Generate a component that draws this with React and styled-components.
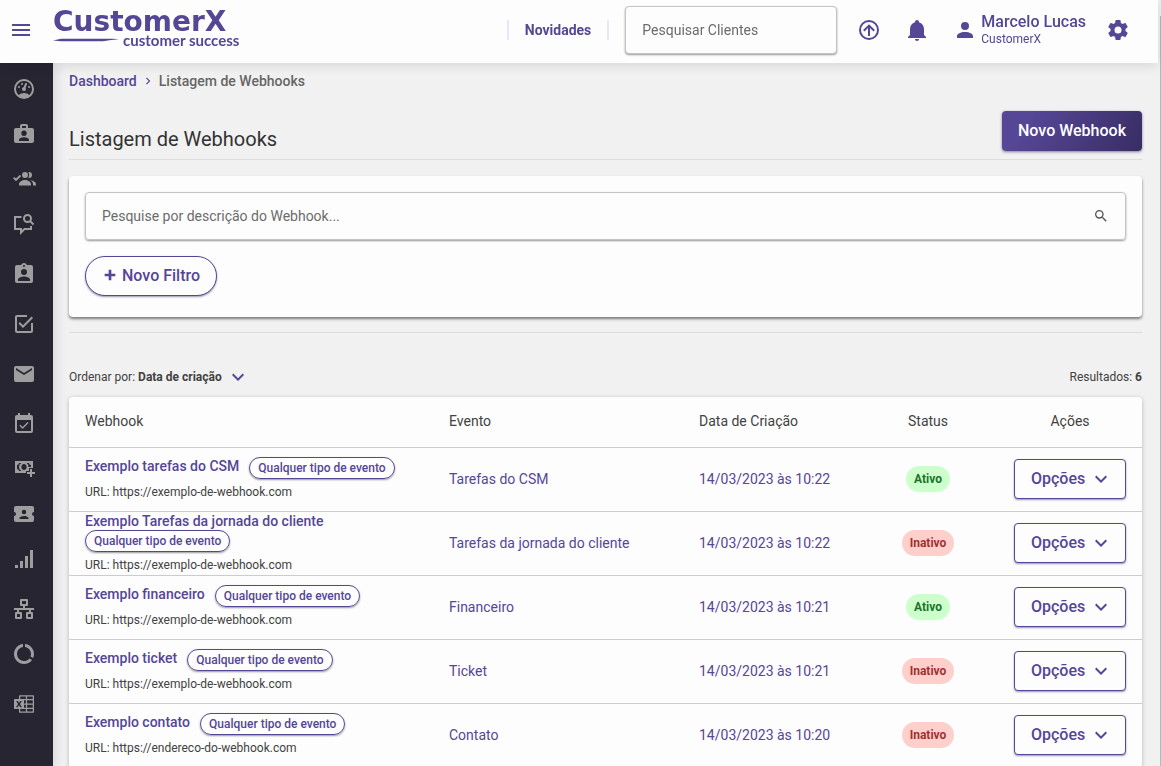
import React from 'react';
import styled, { createGlobalStyle } from 'styled-components';

const icons = {
  menu: 'M3,6H21V8H3V6M3,11H21V13H3V11M3,16H21V18H3V16Z',
  arrowUp:
    'M13,18V10L16.5,13.5L17.92,12.08L12,6.16L6.08,12.08L7.5,13.5L11,10V18H13M12,2A10,10 0 0,1 22,12A10,10 0 0,1 12,22A10,10 0 0,1 2,12A10,10 0 0,1 12,2M12,4A8,8 0 0,0 4,12A8,8 0 0,0 12,20A8,8 0 0,0 20,12A8,8 0 0,0 12,4Z',
  bell: 'M21,19V20H3V19L5,17V11C5,7.9 7.03,5.17 10,4.29C10,4.19 10,4.1 10,4A2,2 0 0,1 12,2A2,2 0 0,1 14,4C14,4.1 14,4.19 14,4.29C16.97,5.17 19,7.9 19,11V17L21,19M14,21A2,2 0 0,1 12,23A2,2 0 0,1 10,21',
  account:
    'M12,4A4,4 0 0,1 16,8A4,4 0 0,1 12,12A4,4 0 0,1 8,8A4,4 0 0,1 12,4M12,14C16.42,14 20,15.79 20,18V20H4V18C4,15.79 7.58,14 12,14Z',
  cog: 'M12,15.5A3.5,3.5 0 0,1 8.5,12A3.5,3.5 0 0,1 12,8.5A3.5,3.5 0 0,1 15.5,12A3.5,3.5 0 0,1 12,15.5M19.43,12.97C19.47,12.65 19.5,12.33 19.5,12C19.5,11.67 19.47,11.34 19.43,11L21.54,9.37C21.73,9.22 21.78,8.95 21.66,8.73L19.66,5.27C19.54,5.05 19.27,4.96 19.05,5.05L16.56,6.05C16.04,5.66 15.5,5.32 14.87,5.07L14.5,2.42C14.46,2.18 14.25,2 14,2H10C9.75,2 9.54,2.18 9.5,2.42L9.13,5.07C8.5,5.32 7.96,5.66 7.44,6.05L4.95,5.05C4.73,4.96 4.46,5.05 4.34,5.27L2.34,8.73C2.21,8.95 2.27,9.22 2.46,9.37L4.57,11C4.53,11.34 4.5,11.67 4.5,12C4.5,12.33 4.53,12.65 4.57,12.97L2.46,14.63C2.27,14.78 2.21,15.05 2.34,15.27L4.34,18.73C4.46,18.95 4.73,19.03 4.95,18.95L7.44,17.94C7.96,18.34 8.5,18.68 9.13,18.93L9.5,21.58C9.54,21.82 9.75,22 10,22H14C14.25,22 14.46,21.82 14.5,21.58L14.87,18.93C15.5,18.67 16.04,18.34 16.56,17.94L19.05,18.95C19.27,19.03 19.54,18.95 19.66,18.73L21.66,15.27C21.78,15.05 21.73,14.78 21.54,14.63L19.43,12.97Z',
  gauge:
    'M12,2A10,10 0 0,0 2,12A10,10 0 0,0 12,22A10,10 0 0,0 22,12A10,10 0 0,0 12,2M12,4A8,8 0 0,1 20,12C20,14.4 19,16.5 17.3,18C15.9,16.7 14,16 12,16C10,16 8.2,16.7 6.7,18C5,16.5 4,14.4 4,12A8,8 0 0,1 12,4M14,5.89C13.62,5.9 13.26,6.15 13.1,6.54L11.81,9.77L11.71,10C11,10.13 10.41,10.6 10.14,11.26C9.73,12.29 10.23,13.45 11.26,13.86C12.29,14.27 13.45,13.77 13.86,12.74C14.12,12.08 14,11.32 13.57,10.76L13.67,10.5L14.96,7.29L14.97,7.26C15.17,6.75 14.92,6.17 14.41,5.96C14.28,5.91 14.15,5.89 14,5.89M10,6A1,1 0 0,0 9,7A1,1 0 0,0 10,8A1,1 0 0,0 11,7A1,1 0 0,0 10,6M7,9A1,1 0 0,0 6,10A1,1 0 0,0 7,11A1,1 0 0,0 8,10A1,1 0 0,0 7,9M17,9A1,1 0 0,0 16,10A1,1 0 0,0 17,11A1,1 0 0,0 18,10A1,1 0 0,0 17,9Z',
  briefcase:
    'M10,2H14A2,2 0 0,1 16,4V6H20A2,2 0 0,1 22,8V19A2,2 0 0,1 20,21H4C2.89,21 2,20.1 2,19V8C2,6.89 2.89,6 4,6H8V4C8,2.89 8.89,2 10,2M14,6V4H10V6H14M12,8.6A2.7,2.7 0 0,0 9.3,11.3A2.7,2.7 0 0,0 12,14A2.7,2.7 0 0,0 14.7,11.3A2.7,2.7 0 0,0 12,8.6M17,19V18C17,16.2 14.2,15.2 12,15.2C9.8,15.2 7,16.2 7,18V19H17Z',
  accounts:
    'M13,5A3,3 0 0,1 16,8A3,3 0 0,1 13,11A3,3 0 0,1 10,8A3,3 0 0,1 13,5M17,5A3,3 0 0,1 20,8A3,3 0 0,1 17,11C16.7,11 16.5,11 16.2,10.9C16.8,10.1 17.1,9.1 17.1,8C17.1,6.9 16.8,5.9 16.2,5.1C16.5,5 16.7,5 17,5M7,18.5V17C7,14.8 10.2,13 13,13C15.8,13 19,14.8 19,17V18.5H7M18.2,13.3C20.8,13.7 24,15 24,17V18.5H21V17C21,15.5 19.8,14.2 18.2,13.3M1,11.2L2.3,9.9L4,11.6L7.9,7.8L9.1,9.2L4,14.2Z',
  clipboard:
    'M19,3H14.82C14.4,1.84 13.3,1 12,1C10.7,1 9.6,1.84 9.18,3H5A2,2 0 0,0 3,5V19A2,2 0 0,0 5,21H19A2,2 0 0,0 21,19V5A2,2 0 0,0 19,3M12,3A1,1 0 0,1 13,4A1,1 0 0,1 12,5A1,1 0 0,1 11,4A1,1 0 0,1 12,3M12,7A3,3 0 0,1 15,10A3,3 0 0,1 12,13A3,3 0 0,1 9,10A3,3 0 0,1 12,7M18,19H6V17.6C6,15.6 10,14.5 12,14.5C14,14.5 18,15.6 18,17.6V19Z',
  checkbox:
    'M19,19H5V5H15V3H5C3.89,3 3,3.89 3,5V19A2,2 0 0,0 5,21H19A2,2 0 0,0 21,19V11H19M7.91,10.08L6.5,11.5L11,16L21,6L19.59,4.58L11,13.17L7.91,10.08Z',
  email:
    'M20,8L12,13L4,8V6L12,11L20,6M20,4H4C2.89,4 2,4.89 2,6V18A2,2 0 0,0 4,20H20A2,2 0 0,0 22,18V6C22,4.89 21.1,4 20,4Z',
  calendar:
    'M19,19H5V8H19M19,3H18V1H16V3H8V1H6V3H5C3.89,3 3,3.9 3,5V19A2,2 0 0,0 5,21H19A2,2 0 0,0 21,19V5A2,2 0 0,0 19,3M16.53,11.06L15.47,10L10.59,14.88L8.47,12.76L7.41,13.82L10.59,17L16.53,11.06Z',
  cash: 'M3,4H21V11H17V14H14V16H3V4M7,6A2,2 0 0,1 5,8V12A2,2 0 0,1 7,14H9.3A4.6,4.6 0 0,1 9.3,6H7M12,7A3,3 0 0,0 9.4,10A3,3 0 0,0 12,13A3,3 0 0,0 14.6,10A3,3 0 0,0 12,7M14.7,6A4.6,4.6 0 0,1 16.5,10H19V8A2,2 0 0,1 17,6H14.7M18,12H20V15H23V17H20V20H18V17H15V15H18V12Z',
  ticket:
    'M20,12A2,2 0 0,0 22,14V18A2,2 0 0,1 20,20H4A2,2 0 0,1 2,18V14C3.11,14 4,13.11 4,12A2,2 0 0,0 2,10V6A2,2 0 0,1 4,4H20A2,2 0 0,1 22,6V10A2,2 0 0,0 20,12M16.5,16.25C16.5,14.75 13.5,14 12,14C10.5,14 7.5,14.75 7.5,16.25V17H16.5V16.25M12,12.25A2.25,2.25 0 0,0 14.25,10A2.25,2.25 0 0,0 12,7.75A2.25,2.25 0 0,0 9.75,10A2.25,2.25 0 0,0 12,12.25Z',
  signal: 'M3,21H6V18H3M8,21H11V14H8M13,21H16V9H13M18,21H21V3H18V21Z',
  sitemap:
    'M9,2H15A1,1 0 0,1 16,3V8A1,1 0 0,1 15,9H13V11H22V13H19V15H20A1,1 0 0,1 21,16V21A1,1 0 0,1 20,22H15A1,1 0 0,1 14,21V16A1,1 0 0,1 15,15H17V13H7V15H9A1,1 0 0,1 10,16V21A1,1 0 0,1 9,22H4A1,1 0 0,1 3,21V16A1,1 0 0,1 4,15H5V13H2V11H11V9H9A1,1 0 0,1 8,8V3A1,1 0 0,1 9,2M10,4V7H14V4H10M5,17V20H8V17H5M16,17V20H19V17H16Z',
  donut:
    'M13,2.05C18.05,2.55 22,6.82 22,12C22,13.45 21.68,14.83 21.12,16.07L18.5,14.54C18.82,13.75 19,12.9 19,12C19,8.47 16.39,5.57 13,5.08V2.05M12,19C14.21,19 16.17,18 17.45,16.38L20.05,17.91C18.23,20.39 15.3,22 12,22C6.47,22 2,17.5 2,12C2,6.81 5.94,2.55 11,2.05V5.08C7.61,5.57 5,8.47 5,12A7,7 0 0,0 12,19Z',
  excel:
    'M21.17 3.25Q21.5 3.25 21.76 3.5 22 3.74 22 4.08V19.92Q22 20.26 21.76 20.5 21.5 20.75 21.17 20.75H7.83Q7.5 20.75 7.24 20.5 7 20.26 7 19.92V17H2.83Q2.5 17 2.24 16.76 2 16.5 2 16.17V7.83Q2 7.5 2.24 7.24 2.5 7 2.83 7H7V4.08Q7 3.74 7.24 3.5 7.5 3.25 7.83 3.25M7 13.06L8.18 15.28H9.97L8 12.06L9.93 8.89H8.22L7.13 10.9L7.09 10.96L7.06 11.03Q6.8 10.5 6.5 9.96 6.25 9.43 5.97 8.89H4.16L6.05 12.08L4 15.28H5.78M13.88 19.5V17H8.25V19.5M13.88 15.75V12.63H12V15.75M13.88 11.38V8.25H12V11.38M13.88 7V4.5H8.25V7M20.75 19.5V17H15.13V19.5M20.75 15.75V12.63H15.13V15.75M20.75 11.38V8.25H15.13V11.38M20.75 7V4.5H15.13V7Z',
  chevronDown: 'M7.41,8.58L12,13.17L16.59,8.58L18,10L12,16L6,10L7.41,8.58Z',
  chevronRight: 'M8.59,16.58L13.17,12L8.59,7.41L10,6L16,12L10,18L8.59,16.58Z',
  plus: 'M20 14H14V20H10V14H4V10H10V4H14V10H20V14Z',
  magnify:
    'M9.5,3A6.5,6.5 0 0,1 16,9.5C16,11.11 15.41,12.59 14.44,13.73L14.71,14H15.5L20.5,19L19,20.5L14,15.5V14.71L13.73,14.44C12.59,15.41 11.11,16 9.5,16A6.5,6.5 0 0,1 3,9.5A6.5,6.5 0 0,1 9.5,3M9.5,5C7,5 5,7 5,9.5C5,12 7,14 9.5,14C12,14 14,12 14,9.5C14,7 12,5 9.5,5Z',
};

const Icon = ({ name, size = 24 }) => (
  <Svg width={size} height={size} viewBox="0 0 24 24" aria-hidden="true">
    <path fillRule="evenodd" d={icons[name]} />
  </Svg>
);

const MessageSearchIcon = () => (
  <Svg width="24" height="24" viewBox="0 0 24 24" aria-hidden="true">
    <g fill="none" stroke="currentColor" strokeWidth="2">
      <path d="M9.5 5H3V17H9V20.5L12.5 17H19V14" />
      <circle cx="15.5" cy="6.5" r="3.5" />
      <path d="M18 9L21.5 12.5" />
    </g>
  </Svg>
);

const menuItems = [
  { label: 'Dashboard', icon: 'gauge' },
  { label: 'Clientes', icon: 'briefcase' },
  { label: 'Contatos', icon: 'accounts' },
  { label: 'Interações', icon: 'message' },
  { label: 'Cadastros', icon: 'clipboard', spaced: true },
  { label: 'Tarefas', icon: 'checkbox', spaced: true },
  { label: 'E-mails', icon: 'email', spaced: true },
  { label: 'Agenda', icon: 'calendar', spaced: true },
  { label: 'Financeiro', icon: 'cash' },
  { label: 'Tickets', icon: 'ticket' },
  { label: 'Indicadores', icon: 'signal' },
  { label: 'Jornadas', icon: 'sitemap', spaced: true },
  { label: 'Uso', icon: 'donut' },
  { label: 'Planilhas', icon: 'excel', spaced: true },
];

const webhooks = [
  {
    name: 'Exemplo tarefas do CSM',
    url: 'https://exemplo-de-webhook.com',
    event: 'Tarefas do CSM',
    date: '14/03/2023 às 10:22',
    active: true,
  },
  {
    name: 'Exemplo Tarefas da jornada do cliente',
    url: 'https://exemplo-de-webhook.com',
    event: 'Tarefas da jornada do cliente',
    date: '14/03/2023 às 10:22',
    active: false,
  },
  {
    name: 'Exemplo financeiro',
    url: 'https://exemplo-de-webhook.com',
    event: 'Financeiro',
    date: '14/03/2023 às 10:21',
    active: true,
  },
  {
    name: 'Exemplo ticket',
    url: 'https://exemplo-de-webhook.com',
    event: 'Ticket',
    date: '14/03/2023 às 10:21',
    active: false,
  },
  {
    name: 'Exemplo contato',
    url: 'https://endereco-do-webhook.com',
    event: 'Contato',
    date: '14/03/2023 às 10:20',
    active: false,
  },
];

const App = () => {
  return (
    <>
      <GlobalStyle />
      <Page>
        <Header>
          <IconButton aria-label="Menu">
            <Icon name="menu" />
          </IconButton>
          <Logo href="#">
            <LogoName>CustomerX</LogoName>
            <LogoTagline>
              <LogoSwoosh viewBox="0 0 66 4" aria-hidden="true">
                <path d="M0 2.4L8 0.8H60L66 1.2L58 2L50 3.2H8Z" />
              </LogoSwoosh>
              customer success
            </LogoTagline>
          </Logo>
          <NewsLink href="#">Novidades</NewsLink>
          <ClientSearch
            type="search"
            aria-label="Pesquisar Clientes"
            placeholder="Pesquisar Clientes"
          />
          <HeaderActions>
            <IconButton aria-label="Enviar">
              <Icon name="arrowUp" />
            </IconButton>
            <IconButton aria-label="Notificações">
              <Icon name="bell" />
            </IconButton>
            <User href="#">
              <Icon name="account" />
              <span>
                <UserName>Marcelo Lucas</UserName>
                <UserCompany>CustomerX</UserCompany>
              </span>
            </User>
          </HeaderActions>
          <IconButton aria-label="Configurações">
            <Icon name="cog" />
          </IconButton>
        </Header>

        <Body>
          <Sidebar>
            {menuItems.map((item) => (
              <SidebarLink
                key={item.label}
                href="#"
                aria-label={item.label}
                $spaced={item.spaced}
              >
                {item.icon === 'message' ? (
                  <MessageSearchIcon />
                ) : (
                  <Icon name={item.icon} />
                )}
              </SidebarLink>
            ))}
          </Sidebar>

          <Main>
            <Breadcrumb>
              <BreadcrumbLink href="#">Dashboard</BreadcrumbLink>
              <Icon name="chevronRight" size={14} />
              <span>Listagem de Webhooks</span>
            </Breadcrumb>

            <TitleBar>
              <Title>Listagem de Webhooks</Title>
              <PrimaryButton>Novo Webhook</PrimaryButton>
            </TitleBar>

            <FilterCard>
              <SearchField>
                <SearchInput
                  type="search"
                  aria-label="Pesquisar webhook"
                  placeholder="Pesquise por descrição do Webhook..."
                />
                <Icon name="magnify" size={16} />
              </SearchField>
              <FilterButton>
                <Icon name="plus" size={16} />
                Novo Filtro
              </FilterButton>
            </FilterCard>

            <ListBar>
              <SortButton>
                <span>
                  Ordenar por: <b>Data de criação</b>
                </span>
                <Icon name="chevronDown" />
              </SortButton>
              <span>
                Resultados: <b>6</b>
              </span>
            </ListBar>

            <Table>
              <colgroup>
                <col />
                <Col $width={250} />
                <Col $width={175} />
                <Col $width={140} />
                <Col $width={144} />
              </colgroup>
              <thead>
                <tr>
                  <HeadCell>Webhook</HeadCell>
                  <HeadCell>Evento</HeadCell>
                  <HeadCell>Data de Criação</HeadCell>
                  <HeadCell $center>Status</HeadCell>
                  <HeadCell $center>Ações</HeadCell>
                </tr>
              </thead>
              <tbody>
                {webhooks.map((webhook) => (
                  <tr key={webhook.name}>
                    <Cell>
                      <NameLine>
                        <WebhookName href="#">{webhook.name}</WebhookName>
                        <Chip>Qualquer tipo de evento</Chip>
                      </NameLine>
                      <Url>URL: {webhook.url}</Url>
                    </Cell>
                    <Cell>{webhook.event}</Cell>
                    <Cell>{webhook.date}</Cell>
                    <Cell $center>
                      <Status $active={webhook.active}>
                        {webhook.active ? 'Ativo' : 'Inativo'}
                      </Status>
                    </Cell>
                    <Cell $center>
                      <OptionsButton>
                        Opções
                        <Icon name="chevronDown" />
                      </OptionsButton>
                    </Cell>
                  </tr>
                ))}
              </tbody>
            </Table>
          </Main>
        </Body>
        <ScrollThumb />
      </Page>
    </>
  );
};

const GlobalStyle = createGlobalStyle`
  * {
    box-sizing: border-box;
  }

  body {
    margin: 0;
    background: #f1f1f1;
    color: #424242;
    font-family: Roboto, sans-serif;
    font-size: 14px;
  }

  a {
    text-decoration: none;
  }

  button,
  input {
    font-family: inherit;
  }

  button {
    cursor: pointer;
  }

  b {
    font-weight: 700;
  }
`;

const Svg = styled.svg`
  display: block;
  flex-shrink: 0;
  fill: currentColor;
`;

const Page = styled.div`
  display: flex;
  flex-direction: column;
  height: 100vh;
  overflow: hidden;
  padding-right: 3px;
`;

const Header = styled.header`
  display: flex;
  align-items: center;
  flex-shrink: 0;
  height: 63px;
  padding: 0 28px 3px 9px;
  background: #fdfdfd;
  box-shadow: 0 2px 12px rgba(0, 0, 0, 0.12);
  z-index: 1;
`;

const IconButton = styled.button`
  display: flex;
  padding: 0;
  border: 0;
  background: none;
  color: #554696;
`;

const Logo = styled.a`
  display: flex;
  flex-direction: column;
  margin: 0 auto 0 20px;
  color: #554696;
`;

const LogoName = styled.span`
  font-family: 'DejaVu Sans', sans-serif;
  font-size: 28px;
  font-weight: 700;
  line-height: 20px;
`;

const LogoTagline = styled.span`
  display: flex;
  align-items: center;
  gap: 4px;
  font-family: Lato, sans-serif;
  font-size: 15px;
  font-weight: 700;
  line-height: 16px;
`;

const LogoSwoosh = styled.svg`
  width: 66px;
  height: 4px;
  fill: currentColor;
`;

const NewsLink = styled.a`
  padding: 0 16px;
  border: solid #e8e5fd;
  border-width: 0 2px;
  color: #554696;
  font-weight: 700;
  line-height: 20px;
`;

const ClientSearch = styled.input`
  width: 212px;
  height: 48px;
  margin-left: 16px;
  padding: 0 16px;
  border: 1px solid #c4c4c4;
  border-radius: 4px;
  background: #fdfdfd;
  box-shadow: 0 1px 2px rgba(0, 0, 0, 0.4);
  font-size: 14px;

  &::placeholder {
    color: #6b6b6b;
  }
`;

const HeaderActions = styled.div`
  display: flex;
  align-items: center;
  gap: 24px;
  margin: 0 20px;
`;

const User = styled.a`
  display: flex;
  align-items: center;
  gap: 4px;
  color: #554696;
`;

const UserName = styled.strong`
  display: block;
  font-size: 16px;
  font-weight: 500;
  line-height: 18px;
`;

const UserCompany = styled.span`
  display: block;
  font-size: 12px;
  line-height: 16px;
`;

const Body = styled.div`
  display: flex;
  flex: 1;
  min-height: 0;
`;

const Sidebar = styled.nav`
  display: flex;
  flex-direction: column;
  flex-shrink: 0;
  gap: 1px;
  width: 53px;
  padding-top: 4px;
  background: #282533;
  box-shadow: 2px 0 12px rgba(0, 0, 0, 0.12);
`;

const SidebarLink = styled.a`
  display: flex;
  align-items: center;
  flex-shrink: 0;
  height: 44px;
  margin-top: ${({ $spaced }) => ($spaced ? '5px' : '0')};
  padding-left: 12px;
  color: #9e9e9e;
`;

const Main = styled.main`
  flex: 1;
  min-width: 0;
  padding: 8px 16px 0;
`;

const Breadcrumb = styled.nav`
  display: flex;
  align-items: center;
  gap: 4px;
  color: #666;
  font-weight: 500;
  line-height: 20px;

  svg {
    color: #554696;
  }
`;

const BreadcrumbLink = styled.a`
  color: #554696;
`;

const TitleBar = styled.div`
  display: flex;
  align-items: flex-end;
  justify-content: space-between;
  margin-top: 20px;
  padding-bottom: 8px;
  border-bottom: 1px solid #ddd;
`;

const Title = styled.h1`
  margin: 0;
  color: #333;
  font-size: 20px;
  font-weight: 400;
  line-height: 24px;
`;

const PrimaryButton = styled.button`
  height: 40px;
  padding: 0 16px 2px;
  border: 0;
  border-radius: 4px;
  background: linear-gradient(120deg, #554696 20%, #382d63 100%);
  box-shadow: 0 1px 3px rgba(56, 45, 99, 0.6);
  color: #fff;
  font-size: 16px;
  font-weight: 500;
`;

const FilterCard = styled.section`
  margin-top: 16px;
  padding: 16px 16px 21px;
  border-radius: 4px;
  background: #fdfdfd;
  box-shadow: 0 2px 3px rgba(0, 0, 0, 0.5);
`;

const SearchField = styled.div`
  display: flex;
  align-items: center;
  height: 48px;
  margin-bottom: 16px;
  padding: 0 16px;
  border: 1px solid #c4c4c4;
  border-radius: 4px;
  box-shadow: 0 1px 2px rgba(0, 0, 0, 0.4);
  color: #555;
`;

const SearchInput = styled.input`
  flex: 1;
  padding: 0;
  border: 0;
  outline: 0;
  background: none;
  font-size: 14px;

  &::placeholder {
    color: #6b6b6b;
  }
`;

const FilterButton = styled.button`
  display: flex;
  align-items: center;
  gap: 4px;
  height: 40px;
  padding: 0 16px 2px;
  border: 1px solid #554696;
  border-radius: 20px;
  background: #fdfdfd;
  box-shadow: 0 1px 2px rgba(56, 45, 99, 0.5);
  color: #554696;
  font-size: 16px;
  font-weight: 500;
`;

const ListBar = styled.div`
  display: flex;
  align-items: center;
  justify-content: space-between;
  margin-top: 15px;
  padding: 32px 0 8px;
  border-top: 1px solid #ddd;
  font-size: 12px;
`;

const SortButton = styled.button`
  display: flex;
  align-items: center;
  gap: 4px;
  padding: 0;
  border: 0;
  background: none;
  color: inherit;
  font-size: 12px;

  svg {
    color: #554696;
  }
`;

const Table = styled.table`
  width: 100%;
  table-layout: fixed;
  border-spacing: 0;
  border-radius: 4px;
  background: #fdfdfd;
  box-shadow: 0 1px 4px rgba(0, 0, 0, 0.25);
`;

const Col = styled.col`
  width: ${({ $width }) => $width}px;
`;

const HeadCell = styled.th`
  height: 51px;
  padding: 0 16px 2px;
  border-bottom: 1px solid #ccc;
  font-weight: 400;
  text-align: ${({ $center }) => ($center ? 'center' : 'left')};
`;

const Cell = styled.td`
  height: 64px;
  padding: 0 16px 2px;
  border-bottom: 1px solid #ccc;
  color: #554696;
  text-align: ${({ $center }) => ($center ? 'center' : 'left')};
`;

const NameLine = styled.div`
  display: flex;
  flex-wrap: wrap;
  align-items: flex-start;
  column-gap: 10px;
`;

const WebhookName = styled.a`
  color: #554696;
  font-weight: 500;
  line-height: 18px;
`;

const Chip = styled.span`
  padding: 0 8px;
  border: 1px solid #554696;
  border-radius: 11px;
  box-shadow: 0 1px 2px rgba(0, 0, 0, 0.4);
  font-size: 12px;
  font-weight: 500;
  line-height: 20px;
`;

const Url = styled.div`
  margin-top: 5px;
  color: #424242;
  font-size: 12px;
  line-height: 16px;
`;

const Status = styled.span`
  display: inline-block;
  padding: 0 8px;
  border-radius: 13px;
  background: ${({ $active }) => ($active ? '#ccffcc' : '#ffcfcc')};
  color: ${({ $active }) => ($active ? '#1b7329' : '#a13232')};
  font-size: 12px;
  font-weight: 700;
  line-height: 26px;
`;

const OptionsButton = styled.button`
  display: flex;
  align-items: center;
  justify-content: space-between;
  width: 100%;
  height: 40px;
  padding: 0 12px 0 16px;
  border: 1px solid #554696;
  border-radius: 4px;
  background: #fdfdfd;
  box-shadow: 0 1px 2px rgba(56, 45, 99, 0.5);
  color: #554696;
  font-size: 16px;
  font-weight: 500;
`;

const ScrollThumb = styled.div`
  position: fixed;
  top: 16px;
  right: 0;
  bottom: 0;
  width: 1px;
  background: #b8b8b8;
`;

export default App;
